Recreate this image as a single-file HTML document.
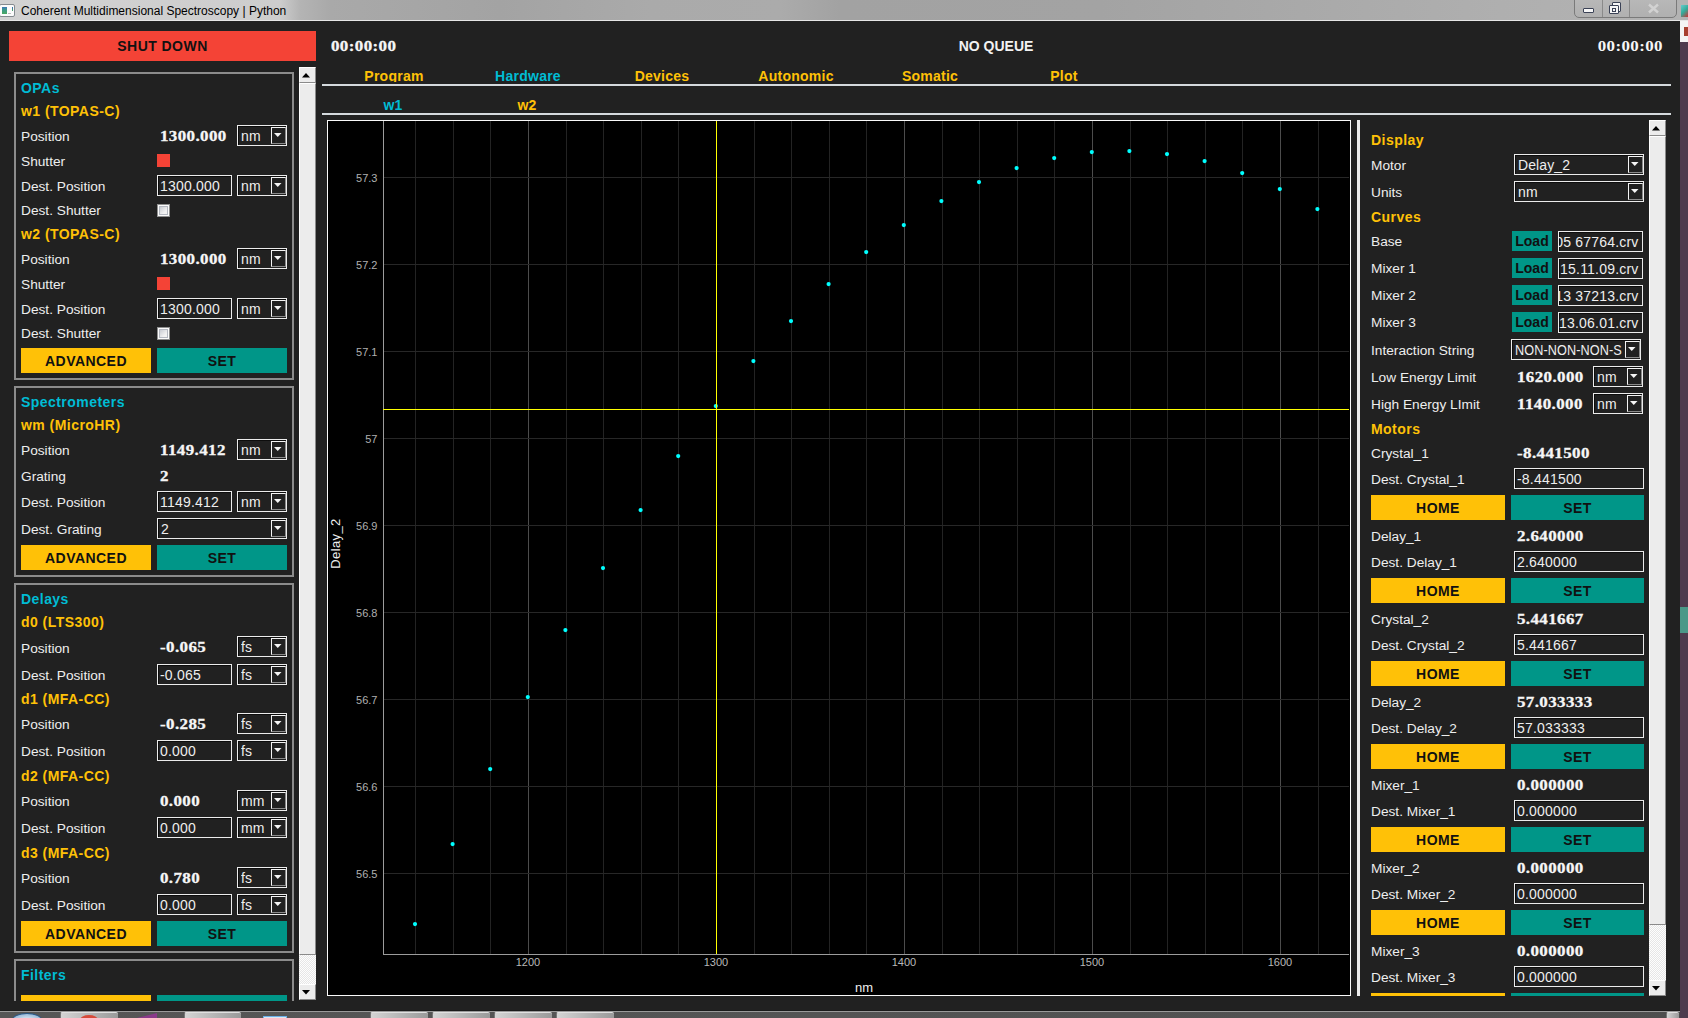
<!DOCTYPE html><html><head><meta charset="utf-8"><style>
html,body{margin:0;padding:0;}
body{width:1688px;height:1018px;overflow:hidden;position:relative;background:#212121;font-family:"Liberation Sans", sans-serif;}
.t{position:absolute;white-space:nowrap;}
.r{position:absolute;}
</style></head><body>
<div class="r" style="left:0;top:0;width:1688px;height:20px;background:linear-gradient(90deg,#d2d2d2 0px,#cdcdcd 280px,#b4b4b4 300px,#a9a9a9 330px,#a3a3a3 500px,#aaaaaa 650px,#ababab 780px,#a2a2a2 840px,#a3a3a3 1100px,#a9a9a9 1300px,#afafaf 1500px,#b3b3b3 1688px);"></div>
<div class="r" style="left:0px;top:20px;width:1688px;height:1px;background:#e6e6e6;"></div>
<div class="r" style="left:-1px;top:4px;width:14px;height:11px;background:#fbfbfb;border:1px solid #858a8f;border-radius:2px;"></div>
<div class="r" style="left:2px;top:7px;width:5px;height:7px;background:linear-gradient(#3f78b8,#3c9a8a 40%,#4aa860);"></div>
<div class="r" style="left:12px;top:7px;width:1px;height:4px;background:linear-gradient(#3a6ab8,#4aa860);"></div>
<div class="r" style="left:8px;top:13px;width:3px;height:1px;background:#bdbdbd;"></div>
<div class="t" style="left:21px;top:5.44px;font-size:12px;line-height:12px;color:#000;">Coherent Multidimensional Spectroscopy | Python</div>
<div class="r" style="left:1574px;top:-2px;width:101px;height:18px;border:1px solid #7a7a7a;border-radius:0 0 5px 5px;background:linear-gradient(#b8b8b8,#b0b0b0);"></div>
<div class="r" style="left:1602px;top:0px;width:1px;height:17px;background:#8a8a8a;"></div>
<div class="r" style="left:1629px;top:0px;width:1px;height:17px;background:#8a8a8a;"></div>
<div class="r" style="left:1583px;top:8px;width:9px;height:3px;border:1px solid #3b4256;border-radius:1px;background:#f6f6f6"></div>
<div class="r" style="left:1612px;top:2px;width:7px;height:8px;border:1px solid #3b4256;border-radius:1px;background:#f6f6f6"></div>
<div class="r" style="left:1609px;top:5px;width:8px;height:7px;border:1px solid #3b4256;border-radius:1px;background:#f6f6f6"></div>
<div class="r" style="left:1612px;top:8px;width:2px;height:2px;border:1px solid #3b4256;"></div>
<svg class="r" style="left:1647px;top:3px" width="13" height="11"><path d="M2 1.5L11 9.5M11 1.5L2 9.5" stroke="#d2d2d2" stroke-width="2.4"/></svg>
<div class="r" style="left:1680px;top:21px;width:8px;height:997px;background:#4e3b4e;"></div>
<div class="r" style="left:1680px;top:21px;width:8px;height:21px;background:#f4f4f4;"></div>
<div class="r" style="left:1684px;top:27px;width:4px;height:9px;background:#a84030;"></div>
<div class="r" style="left:1680px;top:607px;width:8px;height:26px;background:#4b9888;"></div>
<div class="r" style="left:1681px;top:5px;width:7px;height:12px;background:linear-gradient(135deg,#6cc 0,#3a9 50%,#c33 100%)"></div>
<div class="r" style="left:0px;top:1010px;width:1680px;height:1px;background:#1a1a1a;"></div>
<div class="r" style="left:0;top:1011px;width:1680px;height:7px;background:linear-gradient(90deg,#565656,#545454 50%,#4e4e4e);border-top:1px solid #9a9a9a;box-sizing:border-box"></div>
<div class="r" style="left:60px;top:1012px;width:58px;height:6px;background:linear-gradient(90deg,#d4d4d4,#9a9a9a);border-top:1px solid #e0e0e0;border-left:1px solid #777;box-sizing:border-box;border-radius:2px 2px 0 0"></div>
<div class="r" style="left:184px;top:1012px;width:57px;height:6px;background:linear-gradient(90deg,#d4d4d4,#9a9a9a);border-top:1px solid #e0e0e0;border-left:1px solid #777;box-sizing:border-box;border-radius:2px 2px 0 0"></div>
<div class="r" style="left:370px;top:1012px;width:58px;height:6px;background:linear-gradient(90deg,#d4d4d4,#9a9a9a);border-top:1px solid #e0e0e0;border-left:1px solid #777;box-sizing:border-box;border-radius:2px 2px 0 0"></div>
<div class="r" style="left:432px;top:1012px;width:58px;height:6px;background:linear-gradient(90deg,#d4d4d4,#9a9a9a);border-top:1px solid #e0e0e0;border-left:1px solid #777;box-sizing:border-box;border-radius:2px 2px 0 0"></div>
<div class="r" style="left:494px;top:1012px;width:58px;height:6px;background:linear-gradient(90deg,#d4d4d4,#9a9a9a);border-top:1px solid #e0e0e0;border-left:1px solid #777;box-sizing:border-box;border-radius:2px 2px 0 0"></div>
<div class="r" style="left:556px;top:1012px;width:58px;height:6px;background:linear-gradient(90deg,#d4d4d4,#9a9a9a);border-top:1px solid #e0e0e0;border-left:1px solid #777;box-sizing:border-box;border-radius:2px 2px 0 0"></div>
<div class="r" style="left:1666px;top:1012px;width:13px;height:6px;background:linear-gradient(90deg,#d4d4d4,#9a9a9a);border-top:1px solid #e0e0e0;border-left:1px solid #777;box-sizing:border-box;border-radius:2px 2px 0 0"></div>
<div class="r" style="left:12px;top:1013px;width:30px;height:14px;border-radius:50%;background:radial-gradient(#e8f0f8,#7aa4cc);border:1px solid #2a5a8a;box-sizing:border-box"></div>
<div class="r" style="left:80px;top:1015px;width:18px;height:10px;border-radius:50%;background:#d64a3a"></div>
<svg class="r" style="left:133px;top:1013px" width="24" height="6"><path d="M0 6L24 0V6Z" fill="#8a3a8a"/></svg>
<div class="r" style="left:263px;top:1016px;width:22px;height:4px;border:1px solid #6ab0e8;background:#dfe8f0"></div>
<div class="r" style="left:9px;top:31px;width:307px;height:30px;background:#f44336;"></div>
<div class="t" style="left:-37.5px;width:400px;text-align:center;top:39.15px;font-size:14px;line-height:14px;color:#111;font-weight:bold;letter-spacing:0.45px;">SHUT DOWN</div>
<div class="t" style="left:331px;top:38.94px;font-size:15px;line-height:15px;color:#f6f6f6;font-weight:bold;font-family:'Liberation Serif', serif;letter-spacing:0.35px;transform:scaleX(1.13);transform-origin:0 0;-webkit-text-stroke:0.3px #f6f6f6;">00:00:00</div>
<div class="t" style="left:796px;width:400px;text-align:center;top:39.15px;font-size:14px;line-height:14px;color:#f2f2f2;font-weight:bold;">NO QUEUE</div>
<div class="t" style="left:1262px;width:400px;text-align:right;top:38.94px;font-size:15px;line-height:15px;color:#f6f6f6;font-weight:bold;font-family:'Liberation Serif', serif;letter-spacing:0.35px;transform:scaleX(1.13);transform-origin:100% 0;margin-left:1px">00:00:00</div>
<div class="r" style="left:299px;top:67px;width:15px;height:14px;background:#ececec;border-left:1px solid #fff;border-top:1px solid #fff;border-right:1px solid #8a8a8a;border-bottom:1px solid #8a8a8a;"></div>
<svg class="r" style="left:302px;top:73px" width="9" height="5"><path d="M0 4.5H8L4 0Z" fill="#000"/></svg>
<div class="r" style="left:299px;top:83px;width:15px;height:870px;background:#ececec;border-left:1px solid #fff;border-top:1px solid #fff;border-right:1px solid #8a8a8a;border-bottom:1px solid #8a8a8a;"></div>
<div class="r" style="left:299px;top:955px;width:17px;height:29px;background:repeating-conic-gradient(#e6e6e6 0 25%, #fdfdfd 0 50%) 0 0/2px 2px;"></div>
<div class="r" style="left:299px;top:984px;width:15px;height:14px;background:#ececec;border-left:1px solid #fff;border-top:1px solid #fff;border-right:1px solid #8a8a8a;border-bottom:1px solid #8a8a8a;"></div>
<svg class="r" style="left:302px;top:990px" width="9" height="5"><path d="M0 0H8L4 4.5Z" fill="#000"/></svg>
<div class="r" style="left:0;top:0;width:298px;height:1001px;overflow:hidden">
<div class="r" style="left:14px;top:72px;width:280px;height:2px;background:#8c8c8c;"></div>
<div class="r" style="left:14px;top:72px;width:2px;height:308px;background:#8c8c8c;"></div>
<div class="r" style="left:292px;top:72px;width:2px;height:308px;background:#8c8c8c;"></div>
<div class="r" style="left:14px;top:378px;width:280px;height:2px;background:#8c8c8c;"></div>
<div class="r" style="left:14px;top:386px;width:280px;height:2px;background:#8c8c8c;"></div>
<div class="r" style="left:14px;top:386px;width:2px;height:191px;background:#8c8c8c;"></div>
<div class="r" style="left:292px;top:386px;width:2px;height:191px;background:#8c8c8c;"></div>
<div class="r" style="left:14px;top:575px;width:280px;height:2px;background:#8c8c8c;"></div>
<div class="r" style="left:14px;top:583px;width:280px;height:2px;background:#8c8c8c;"></div>
<div class="r" style="left:14px;top:583px;width:2px;height:370px;background:#8c8c8c;"></div>
<div class="r" style="left:292px;top:583px;width:2px;height:370px;background:#8c8c8c;"></div>
<div class="r" style="left:14px;top:951px;width:280px;height:2px;background:#8c8c8c;"></div>
<div class="r" style="left:14px;top:959px;width:280px;height:2px;background:#8c8c8c;"></div>
<div class="r" style="left:14px;top:959px;width:2px;height:42px;background:#8c8c8c;"></div>
<div class="r" style="left:292px;top:959px;width:2px;height:42px;background:#8c8c8c;"></div>
<div class="t" style="left:21px;top:81.15px;font-size:14px;line-height:14px;color:#00bcd4;font-weight:bold;letter-spacing:0.45px;">OPAs</div>
<div class="t" style="left:21px;top:104.15px;font-size:14px;line-height:14px;color:#ffc107;font-weight:bold;letter-spacing:0.45px;">w1 (TOPAS-C)</div>
<div class="t" style="left:21px;top:130.20px;font-size:13.7px;line-height:13.7px;color:#eeeeee;">Position</div>
<div class="t" style="left:160px;top:129.24px;font-size:15px;line-height:15px;color:#f6f6f6;font-weight:bold;font-family:'Liberation Serif', serif;letter-spacing:0.35px;transform:scaleX(1.13);transform-origin:0 0;-webkit-text-stroke:0.3px #f6f6f6;">1300.000</div>
<div class="r" style="left:237px;top:125px;width:48px;height:19px;border:1px solid #ececec;background:#212121;"></div>
<div class="r" style="left:238px;top:126px;width:48px;height:1px;background:#0d0d0d;"></div>
<div class="r" style="left:238px;top:126px;width:1px;height:19px;background:#0d0d0d;"></div>
<div class="r" style="left:271px;top:127px;width:13px;height:15px;border-left:1px solid #f4f4f4;border-top:1px solid #f4f4f4;border-right:1px solid #8a8a8a;border-bottom:1px solid #8a8a8a;background:#212121"></div>
<svg class="r" style="left:274px;top:133px" width="8" height="5"><path d="M0 0H7.5L3.75 4Z" fill="#f4f4f4"/></svg>
<div class="t" style="left:241px;top:128.85px;font-size:14px;line-height:14px;color:#eeeeee;letter-spacing:0.1px;width:30px;overflow:hidden;padding-bottom:5px;">nm</div>
<div class="t" style="left:21px;top:154.70px;font-size:13.7px;line-height:13.7px;color:#eeeeee;">Shutter</div>
<div class="r" style="left:157px;top:154px;width:13px;height:13px;background:#f44336;"></div>
<div class="t" style="left:21px;top:179.70px;font-size:13.7px;line-height:13.7px;color:#eeeeee;">Dest. Position</div>
<div class="r" style="left:157px;top:175px;width:73px;height:19px;border:1px solid #ececec;background:#212121;"></div>
<div class="r" style="left:158px;top:176px;width:73px;height:1px;background:#0d0d0d;"></div>
<div class="r" style="left:158px;top:176px;width:1px;height:19px;background:#0d0d0d;"></div>
<div class="t" style="left:160px;top:178.85px;font-size:14px;line-height:14px;color:#eeeeee;letter-spacing:0.2px;">1300.000</div>
<div class="r" style="left:237px;top:175px;width:48px;height:19px;border:1px solid #ececec;background:#212121;"></div>
<div class="r" style="left:238px;top:176px;width:48px;height:1px;background:#0d0d0d;"></div>
<div class="r" style="left:238px;top:176px;width:1px;height:19px;background:#0d0d0d;"></div>
<div class="r" style="left:271px;top:177px;width:13px;height:15px;border-left:1px solid #f4f4f4;border-top:1px solid #f4f4f4;border-right:1px solid #8a8a8a;border-bottom:1px solid #8a8a8a;background:#212121"></div>
<svg class="r" style="left:274px;top:183px" width="8" height="5"><path d="M0 0H7.5L3.75 4Z" fill="#f4f4f4"/></svg>
<div class="t" style="left:241px;top:178.85px;font-size:14px;line-height:14px;color:#eeeeee;letter-spacing:0.1px;width:30px;overflow:hidden;padding-bottom:5px;">nm</div>
<div class="t" style="left:21px;top:204.30px;font-size:13.7px;line-height:13.7px;color:#eeeeee;">Dest. Shutter</div>
<div class="r" style="left:157px;top:204px;width:11px;height:11px;border:1px solid #8e8f8f;background:#fbfbfb"></div>
<div class="r" style="left:159px;top:206px;width:7px;height:7px;border:1px solid #b4b8c0;background:linear-gradient(135deg,#c9ccd2,#f2f2f2 70%)"></div>
<div class="t" style="left:21px;top:227.15px;font-size:14px;line-height:14px;color:#ffc107;font-weight:bold;letter-spacing:0.45px;">w2 (TOPAS-C)</div>
<div class="t" style="left:21px;top:253.20px;font-size:13.7px;line-height:13.7px;color:#eeeeee;">Position</div>
<div class="t" style="left:160px;top:252.24px;font-size:15px;line-height:15px;color:#f6f6f6;font-weight:bold;font-family:'Liberation Serif', serif;letter-spacing:0.35px;transform:scaleX(1.13);transform-origin:0 0;-webkit-text-stroke:0.3px #f6f6f6;">1300.000</div>
<div class="r" style="left:237px;top:248px;width:48px;height:19px;border:1px solid #ececec;background:#212121;"></div>
<div class="r" style="left:238px;top:249px;width:48px;height:1px;background:#0d0d0d;"></div>
<div class="r" style="left:238px;top:249px;width:1px;height:19px;background:#0d0d0d;"></div>
<div class="r" style="left:271px;top:250px;width:13px;height:15px;border-left:1px solid #f4f4f4;border-top:1px solid #f4f4f4;border-right:1px solid #8a8a8a;border-bottom:1px solid #8a8a8a;background:#212121"></div>
<svg class="r" style="left:274px;top:256px" width="8" height="5"><path d="M0 0H7.5L3.75 4Z" fill="#f4f4f4"/></svg>
<div class="t" style="left:241px;top:251.85px;font-size:14px;line-height:14px;color:#eeeeee;letter-spacing:0.1px;width:30px;overflow:hidden;padding-bottom:5px;">nm</div>
<div class="t" style="left:21px;top:277.70px;font-size:13.7px;line-height:13.7px;color:#eeeeee;">Shutter</div>
<div class="r" style="left:157px;top:277px;width:13px;height:13px;background:#f44336;"></div>
<div class="t" style="left:21px;top:302.70px;font-size:13.7px;line-height:13.7px;color:#eeeeee;">Dest. Position</div>
<div class="r" style="left:157px;top:298px;width:73px;height:19px;border:1px solid #ececec;background:#212121;"></div>
<div class="r" style="left:158px;top:299px;width:73px;height:1px;background:#0d0d0d;"></div>
<div class="r" style="left:158px;top:299px;width:1px;height:19px;background:#0d0d0d;"></div>
<div class="t" style="left:160px;top:301.85px;font-size:14px;line-height:14px;color:#eeeeee;letter-spacing:0.2px;">1300.000</div>
<div class="r" style="left:237px;top:298px;width:48px;height:19px;border:1px solid #ececec;background:#212121;"></div>
<div class="r" style="left:238px;top:299px;width:48px;height:1px;background:#0d0d0d;"></div>
<div class="r" style="left:238px;top:299px;width:1px;height:19px;background:#0d0d0d;"></div>
<div class="r" style="left:271px;top:300px;width:13px;height:15px;border-left:1px solid #f4f4f4;border-top:1px solid #f4f4f4;border-right:1px solid #8a8a8a;border-bottom:1px solid #8a8a8a;background:#212121"></div>
<svg class="r" style="left:274px;top:306px" width="8" height="5"><path d="M0 0H7.5L3.75 4Z" fill="#f4f4f4"/></svg>
<div class="t" style="left:241px;top:301.85px;font-size:14px;line-height:14px;color:#eeeeee;letter-spacing:0.1px;width:30px;overflow:hidden;padding-bottom:5px;">nm</div>
<div class="t" style="left:21px;top:327.30px;font-size:13.7px;line-height:13.7px;color:#eeeeee;">Dest. Shutter</div>
<div class="r" style="left:157px;top:327px;width:11px;height:11px;border:1px solid #8e8f8f;background:#fbfbfb"></div>
<div class="r" style="left:159px;top:329px;width:7px;height:7px;border:1px solid #b4b8c0;background:linear-gradient(135deg,#c9ccd2,#f2f2f2 70%)"></div>
<div class="r" style="left:21px;top:348px;width:130px;height:25px;background:#ffc107;"></div>
<div class="t" style="left:-114.0px;width:400px;text-align:center;top:353.65px;font-size:14px;line-height:14px;color:#111;font-weight:bold;letter-spacing:0.45px;">ADVANCED</div>
<div class="r" style="left:157px;top:348px;width:130px;height:25px;background:#009688;"></div>
<div class="t" style="left:22.0px;width:400px;text-align:center;top:353.65px;font-size:14px;line-height:14px;color:#111;font-weight:bold;letter-spacing:0.45px;">SET</div>
<div class="t" style="left:21px;top:394.65px;font-size:14px;line-height:14px;color:#00bcd4;font-weight:bold;letter-spacing:0.45px;">Spectrometers</div>
<div class="t" style="left:21px;top:418.15px;font-size:14px;line-height:14px;color:#ffc107;font-weight:bold;letter-spacing:0.45px;">wm (MicroHR)</div>
<div class="t" style="left:21px;top:444.10px;font-size:13.7px;line-height:13.7px;color:#eeeeee;">Position</div>
<div class="t" style="left:160px;top:442.94px;font-size:15px;line-height:15px;color:#f6f6f6;font-weight:bold;font-family:'Liberation Serif', serif;letter-spacing:0.35px;transform:scaleX(1.13);transform-origin:0 0;-webkit-text-stroke:0.3px #f6f6f6;">1149.412</div>
<div class="r" style="left:237px;top:439px;width:48px;height:19px;border:1px solid #ececec;background:#212121;"></div>
<div class="r" style="left:238px;top:440px;width:48px;height:1px;background:#0d0d0d;"></div>
<div class="r" style="left:238px;top:440px;width:1px;height:19px;background:#0d0d0d;"></div>
<div class="r" style="left:271px;top:441px;width:13px;height:15px;border-left:1px solid #f4f4f4;border-top:1px solid #f4f4f4;border-right:1px solid #8a8a8a;border-bottom:1px solid #8a8a8a;background:#212121"></div>
<svg class="r" style="left:274px;top:447px" width="8" height="5"><path d="M0 0H7.5L3.75 4Z" fill="#f4f4f4"/></svg>
<div class="t" style="left:241px;top:442.85px;font-size:14px;line-height:14px;color:#eeeeee;letter-spacing:0.1px;width:30px;overflow:hidden;padding-bottom:5px;">nm</div>
<div class="t" style="left:21px;top:470.00px;font-size:13.7px;line-height:13.7px;color:#eeeeee;">Grating</div>
<div class="t" style="left:160px;top:468.84px;font-size:15px;line-height:15px;color:#f6f6f6;font-weight:bold;font-family:'Liberation Serif', serif;letter-spacing:0.35px;transform:scaleX(1.13);transform-origin:0 0;-webkit-text-stroke:0.3px #f6f6f6;">2</div>
<div class="t" style="left:21px;top:496.10px;font-size:13.7px;line-height:13.7px;color:#eeeeee;">Dest. Position</div>
<div class="r" style="left:157px;top:491px;width:73px;height:19px;border:1px solid #ececec;background:#212121;"></div>
<div class="r" style="left:158px;top:492px;width:73px;height:1px;background:#0d0d0d;"></div>
<div class="r" style="left:158px;top:492px;width:1px;height:19px;background:#0d0d0d;"></div>
<div class="t" style="left:160px;top:494.85px;font-size:14px;line-height:14px;color:#eeeeee;letter-spacing:0.2px;">1149.412</div>
<div class="r" style="left:237px;top:491px;width:48px;height:19px;border:1px solid #ececec;background:#212121;"></div>
<div class="r" style="left:238px;top:492px;width:48px;height:1px;background:#0d0d0d;"></div>
<div class="r" style="left:238px;top:492px;width:1px;height:19px;background:#0d0d0d;"></div>
<div class="r" style="left:271px;top:493px;width:13px;height:15px;border-left:1px solid #f4f4f4;border-top:1px solid #f4f4f4;border-right:1px solid #8a8a8a;border-bottom:1px solid #8a8a8a;background:#212121"></div>
<svg class="r" style="left:274px;top:499px" width="8" height="5"><path d="M0 0H7.5L3.75 4Z" fill="#f4f4f4"/></svg>
<div class="t" style="left:241px;top:494.85px;font-size:14px;line-height:14px;color:#eeeeee;letter-spacing:0.1px;width:30px;overflow:hidden;padding-bottom:5px;">nm</div>
<div class="t" style="left:21px;top:522.60px;font-size:13.7px;line-height:13.7px;color:#eeeeee;">Dest. Grating</div>
<div class="r" style="left:157px;top:518px;width:128px;height:19px;border:1px solid #ececec;background:#212121;"></div>
<div class="r" style="left:158px;top:519px;width:128px;height:1px;background:#0d0d0d;"></div>
<div class="r" style="left:158px;top:519px;width:1px;height:19px;background:#0d0d0d;"></div>
<div class="r" style="left:271px;top:520px;width:13px;height:15px;border-left:1px solid #f4f4f4;border-top:1px solid #f4f4f4;border-right:1px solid #8a8a8a;border-bottom:1px solid #8a8a8a;background:#212121"></div>
<svg class="r" style="left:274px;top:526px" width="8" height="5"><path d="M0 0H7.5L3.75 4Z" fill="#f4f4f4"/></svg>
<div class="t" style="left:161px;top:521.85px;font-size:14px;line-height:14px;color:#eeeeee;letter-spacing:0.1px;width:110px;overflow:hidden;padding-bottom:5px;">2</div>
<div class="r" style="left:21px;top:545px;width:130px;height:25px;background:#ffc107;"></div>
<div class="t" style="left:-114.0px;width:400px;text-align:center;top:550.65px;font-size:14px;line-height:14px;color:#111;font-weight:bold;letter-spacing:0.45px;">ADVANCED</div>
<div class="r" style="left:157px;top:545px;width:130px;height:25px;background:#009688;"></div>
<div class="t" style="left:22.0px;width:400px;text-align:center;top:550.65px;font-size:14px;line-height:14px;color:#111;font-weight:bold;letter-spacing:0.45px;">SET</div>
<div class="t" style="left:21px;top:592.15px;font-size:14px;line-height:14px;color:#00bcd4;font-weight:bold;letter-spacing:0.45px;">Delays</div>
<div class="t" style="left:21px;top:615.35px;font-size:14px;line-height:14px;color:#ffc107;font-weight:bold;letter-spacing:0.45px;">d0 (LTS300)</div>
<div class="t" style="left:21px;top:641.50px;font-size:13.7px;line-height:13.7px;color:#eeeeee;">Position</div>
<div class="t" style="left:160px;top:640.14px;font-size:15px;line-height:15px;color:#f6f6f6;font-weight:bold;font-family:'Liberation Serif', serif;letter-spacing:0.35px;transform:scaleX(1.13);transform-origin:0 0;-webkit-text-stroke:0.3px #f6f6f6;">-0.065</div>
<div class="r" style="left:237px;top:636px;width:48px;height:19px;border:1px solid #ececec;background:#212121;"></div>
<div class="r" style="left:238px;top:637px;width:48px;height:1px;background:#0d0d0d;"></div>
<div class="r" style="left:238px;top:637px;width:1px;height:19px;background:#0d0d0d;"></div>
<div class="r" style="left:271px;top:638px;width:13px;height:15px;border-left:1px solid #f4f4f4;border-top:1px solid #f4f4f4;border-right:1px solid #8a8a8a;border-bottom:1px solid #8a8a8a;background:#212121"></div>
<svg class="r" style="left:274px;top:644px" width="8" height="5"><path d="M0 0H7.5L3.75 4Z" fill="#f4f4f4"/></svg>
<div class="t" style="left:241px;top:639.85px;font-size:14px;line-height:14px;color:#eeeeee;letter-spacing:0.1px;width:30px;overflow:hidden;padding-bottom:5px;">fs</div>
<div class="t" style="left:21px;top:668.50px;font-size:13.7px;line-height:13.7px;color:#eeeeee;">Dest. Position</div>
<div class="r" style="left:157px;top:664px;width:73px;height:19px;border:1px solid #ececec;background:#212121;"></div>
<div class="r" style="left:158px;top:665px;width:73px;height:1px;background:#0d0d0d;"></div>
<div class="r" style="left:158px;top:665px;width:1px;height:19px;background:#0d0d0d;"></div>
<div class="t" style="left:160px;top:667.85px;font-size:14px;line-height:14px;color:#eeeeee;letter-spacing:0.2px;">-0.065</div>
<div class="r" style="left:237px;top:664px;width:48px;height:19px;border:1px solid #ececec;background:#212121;"></div>
<div class="r" style="left:238px;top:665px;width:48px;height:1px;background:#0d0d0d;"></div>
<div class="r" style="left:238px;top:665px;width:1px;height:19px;background:#0d0d0d;"></div>
<div class="r" style="left:271px;top:666px;width:13px;height:15px;border-left:1px solid #f4f4f4;border-top:1px solid #f4f4f4;border-right:1px solid #8a8a8a;border-bottom:1px solid #8a8a8a;background:#212121"></div>
<svg class="r" style="left:274px;top:672px" width="8" height="5"><path d="M0 0H7.5L3.75 4Z" fill="#f4f4f4"/></svg>
<div class="t" style="left:241px;top:667.85px;font-size:14px;line-height:14px;color:#eeeeee;letter-spacing:0.1px;width:30px;overflow:hidden;padding-bottom:5px;">fs</div>
<div class="t" style="left:21px;top:691.95px;font-size:14px;line-height:14px;color:#ffc107;font-weight:bold;letter-spacing:0.45px;">d1 (MFA-CC)</div>
<div class="t" style="left:21px;top:718.10px;font-size:13.7px;line-height:13.7px;color:#eeeeee;">Position</div>
<div class="t" style="left:160px;top:716.74px;font-size:15px;line-height:15px;color:#f6f6f6;font-weight:bold;font-family:'Liberation Serif', serif;letter-spacing:0.35px;transform:scaleX(1.13);transform-origin:0 0;-webkit-text-stroke:0.3px #f6f6f6;">-0.285</div>
<div class="r" style="left:237px;top:713px;width:48px;height:19px;border:1px solid #ececec;background:#212121;"></div>
<div class="r" style="left:238px;top:714px;width:48px;height:1px;background:#0d0d0d;"></div>
<div class="r" style="left:238px;top:714px;width:1px;height:19px;background:#0d0d0d;"></div>
<div class="r" style="left:271px;top:715px;width:13px;height:15px;border-left:1px solid #f4f4f4;border-top:1px solid #f4f4f4;border-right:1px solid #8a8a8a;border-bottom:1px solid #8a8a8a;background:#212121"></div>
<svg class="r" style="left:274px;top:721px" width="8" height="5"><path d="M0 0H7.5L3.75 4Z" fill="#f4f4f4"/></svg>
<div class="t" style="left:241px;top:716.85px;font-size:14px;line-height:14px;color:#eeeeee;letter-spacing:0.1px;width:30px;overflow:hidden;padding-bottom:5px;">fs</div>
<div class="t" style="left:21px;top:745.10px;font-size:13.7px;line-height:13.7px;color:#eeeeee;">Dest. Position</div>
<div class="r" style="left:157px;top:740px;width:73px;height:19px;border:1px solid #ececec;background:#212121;"></div>
<div class="r" style="left:158px;top:741px;width:73px;height:1px;background:#0d0d0d;"></div>
<div class="r" style="left:158px;top:741px;width:1px;height:19px;background:#0d0d0d;"></div>
<div class="t" style="left:160px;top:743.85px;font-size:14px;line-height:14px;color:#eeeeee;letter-spacing:0.2px;">0.000</div>
<div class="r" style="left:237px;top:740px;width:48px;height:19px;border:1px solid #ececec;background:#212121;"></div>
<div class="r" style="left:238px;top:741px;width:48px;height:1px;background:#0d0d0d;"></div>
<div class="r" style="left:238px;top:741px;width:1px;height:19px;background:#0d0d0d;"></div>
<div class="r" style="left:271px;top:742px;width:13px;height:15px;border-left:1px solid #f4f4f4;border-top:1px solid #f4f4f4;border-right:1px solid #8a8a8a;border-bottom:1px solid #8a8a8a;background:#212121"></div>
<svg class="r" style="left:274px;top:748px" width="8" height="5"><path d="M0 0H7.5L3.75 4Z" fill="#f4f4f4"/></svg>
<div class="t" style="left:241px;top:743.85px;font-size:14px;line-height:14px;color:#eeeeee;letter-spacing:0.1px;width:30px;overflow:hidden;padding-bottom:5px;">fs</div>
<div class="t" style="left:21px;top:768.75px;font-size:14px;line-height:14px;color:#ffc107;font-weight:bold;letter-spacing:0.45px;">d2 (MFA-CC)</div>
<div class="t" style="left:21px;top:794.90px;font-size:13.7px;line-height:13.7px;color:#eeeeee;">Position</div>
<div class="t" style="left:160px;top:793.54px;font-size:15px;line-height:15px;color:#f6f6f6;font-weight:bold;font-family:'Liberation Serif', serif;letter-spacing:0.35px;transform:scaleX(1.13);transform-origin:0 0;-webkit-text-stroke:0.3px #f6f6f6;">0.000</div>
<div class="r" style="left:237px;top:790px;width:48px;height:19px;border:1px solid #ececec;background:#212121;"></div>
<div class="r" style="left:238px;top:791px;width:48px;height:1px;background:#0d0d0d;"></div>
<div class="r" style="left:238px;top:791px;width:1px;height:19px;background:#0d0d0d;"></div>
<div class="r" style="left:271px;top:792px;width:13px;height:15px;border-left:1px solid #f4f4f4;border-top:1px solid #f4f4f4;border-right:1px solid #8a8a8a;border-bottom:1px solid #8a8a8a;background:#212121"></div>
<svg class="r" style="left:274px;top:798px" width="8" height="5"><path d="M0 0H7.5L3.75 4Z" fill="#f4f4f4"/></svg>
<div class="t" style="left:241px;top:793.85px;font-size:14px;line-height:14px;color:#eeeeee;letter-spacing:0.1px;width:30px;overflow:hidden;padding-bottom:5px;">mm</div>
<div class="t" style="left:21px;top:821.90px;font-size:13.7px;line-height:13.7px;color:#eeeeee;">Dest. Position</div>
<div class="r" style="left:157px;top:817px;width:73px;height:19px;border:1px solid #ececec;background:#212121;"></div>
<div class="r" style="left:158px;top:818px;width:73px;height:1px;background:#0d0d0d;"></div>
<div class="r" style="left:158px;top:818px;width:1px;height:19px;background:#0d0d0d;"></div>
<div class="t" style="left:160px;top:820.85px;font-size:14px;line-height:14px;color:#eeeeee;letter-spacing:0.2px;">0.000</div>
<div class="r" style="left:237px;top:817px;width:48px;height:19px;border:1px solid #ececec;background:#212121;"></div>
<div class="r" style="left:238px;top:818px;width:48px;height:1px;background:#0d0d0d;"></div>
<div class="r" style="left:238px;top:818px;width:1px;height:19px;background:#0d0d0d;"></div>
<div class="r" style="left:271px;top:819px;width:13px;height:15px;border-left:1px solid #f4f4f4;border-top:1px solid #f4f4f4;border-right:1px solid #8a8a8a;border-bottom:1px solid #8a8a8a;background:#212121"></div>
<svg class="r" style="left:274px;top:825px" width="8" height="5"><path d="M0 0H7.5L3.75 4Z" fill="#f4f4f4"/></svg>
<div class="t" style="left:241px;top:820.85px;font-size:14px;line-height:14px;color:#eeeeee;letter-spacing:0.1px;width:30px;overflow:hidden;padding-bottom:5px;">mm</div>
<div class="t" style="left:21px;top:845.75px;font-size:14px;line-height:14px;color:#ffc107;font-weight:bold;letter-spacing:0.45px;">d3 (MFA-CC)</div>
<div class="t" style="left:21px;top:871.90px;font-size:13.7px;line-height:13.7px;color:#eeeeee;">Position</div>
<div class="t" style="left:160px;top:870.54px;font-size:15px;line-height:15px;color:#f6f6f6;font-weight:bold;font-family:'Liberation Serif', serif;letter-spacing:0.35px;transform:scaleX(1.13);transform-origin:0 0;-webkit-text-stroke:0.3px #f6f6f6;">0.780</div>
<div class="r" style="left:237px;top:867px;width:48px;height:19px;border:1px solid #ececec;background:#212121;"></div>
<div class="r" style="left:238px;top:868px;width:48px;height:1px;background:#0d0d0d;"></div>
<div class="r" style="left:238px;top:868px;width:1px;height:19px;background:#0d0d0d;"></div>
<div class="r" style="left:271px;top:869px;width:13px;height:15px;border-left:1px solid #f4f4f4;border-top:1px solid #f4f4f4;border-right:1px solid #8a8a8a;border-bottom:1px solid #8a8a8a;background:#212121"></div>
<svg class="r" style="left:274px;top:875px" width="8" height="5"><path d="M0 0H7.5L3.75 4Z" fill="#f4f4f4"/></svg>
<div class="t" style="left:241px;top:870.85px;font-size:14px;line-height:14px;color:#eeeeee;letter-spacing:0.1px;width:30px;overflow:hidden;padding-bottom:5px;">fs</div>
<div class="t" style="left:21px;top:898.90px;font-size:13.7px;line-height:13.7px;color:#eeeeee;">Dest. Position</div>
<div class="r" style="left:157px;top:894px;width:73px;height:19px;border:1px solid #ececec;background:#212121;"></div>
<div class="r" style="left:158px;top:895px;width:73px;height:1px;background:#0d0d0d;"></div>
<div class="r" style="left:158px;top:895px;width:1px;height:19px;background:#0d0d0d;"></div>
<div class="t" style="left:160px;top:897.85px;font-size:14px;line-height:14px;color:#eeeeee;letter-spacing:0.2px;">0.000</div>
<div class="r" style="left:237px;top:894px;width:48px;height:19px;border:1px solid #ececec;background:#212121;"></div>
<div class="r" style="left:238px;top:895px;width:48px;height:1px;background:#0d0d0d;"></div>
<div class="r" style="left:238px;top:895px;width:1px;height:19px;background:#0d0d0d;"></div>
<div class="r" style="left:271px;top:896px;width:13px;height:15px;border-left:1px solid #f4f4f4;border-top:1px solid #f4f4f4;border-right:1px solid #8a8a8a;border-bottom:1px solid #8a8a8a;background:#212121"></div>
<svg class="r" style="left:274px;top:902px" width="8" height="5"><path d="M0 0H7.5L3.75 4Z" fill="#f4f4f4"/></svg>
<div class="t" style="left:241px;top:897.85px;font-size:14px;line-height:14px;color:#eeeeee;letter-spacing:0.1px;width:30px;overflow:hidden;padding-bottom:5px;">fs</div>
<div class="r" style="left:21px;top:921px;width:130px;height:25px;background:#ffc107;"></div>
<div class="t" style="left:-114.0px;width:400px;text-align:center;top:926.65px;font-size:14px;line-height:14px;color:#111;font-weight:bold;letter-spacing:0.45px;">ADVANCED</div>
<div class="r" style="left:157px;top:921px;width:130px;height:25px;background:#009688;"></div>
<div class="t" style="left:22.0px;width:400px;text-align:center;top:926.65px;font-size:14px;line-height:14px;color:#111;font-weight:bold;letter-spacing:0.45px;">SET</div>
<div class="t" style="left:21px;top:968.15px;font-size:14px;line-height:14px;color:#00bcd4;font-weight:bold;letter-spacing:0.45px;">Filters</div>
<div class="r" style="left:21px;top:995px;width:130px;height:25px;background:#ffc107;"></div>
<div class="r" style="left:157px;top:995px;width:130px;height:25px;background:#009688;"></div>
</div>
<div class="t" style="left:194px;width:400px;text-align:center;top:69.15px;font-size:14px;line-height:14px;color:#ffc107;font-weight:bold;letter-spacing:0.25px;height:12.8px;overflow:hidden;">Program</div>
<div class="t" style="left:328px;width:400px;text-align:center;top:69.15px;font-size:14px;line-height:14px;color:#00bcd4;font-weight:bold;letter-spacing:0.25px;height:12.8px;overflow:hidden;">Hardware</div>
<div class="t" style="left:462px;width:400px;text-align:center;top:69.15px;font-size:14px;line-height:14px;color:#ffc107;font-weight:bold;letter-spacing:0.25px;height:12.8px;overflow:hidden;">Devices</div>
<div class="t" style="left:596px;width:400px;text-align:center;top:69.15px;font-size:14px;line-height:14px;color:#ffc107;font-weight:bold;letter-spacing:0.25px;height:12.8px;overflow:hidden;">Autonomic</div>
<div class="t" style="left:730px;width:400px;text-align:center;top:69.15px;font-size:14px;line-height:14px;color:#ffc107;font-weight:bold;letter-spacing:0.25px;height:12.8px;overflow:hidden;">Somatic</div>
<div class="t" style="left:864px;width:400px;text-align:center;top:69.15px;font-size:14px;line-height:14px;color:#ffc107;font-weight:bold;letter-spacing:0.25px;height:12.8px;overflow:hidden;">Plot</div>
<div class="r" style="left:322px;top:84px;width:1349px;height:2px;background:#d4d9dd;"></div>
<div class="t" style="left:193px;width:400px;text-align:center;top:98.15px;font-size:14px;line-height:14px;color:#00bcd4;font-weight:bold;letter-spacing:0.25px;">w1</div>
<div class="t" style="left:327px;width:400px;text-align:center;top:98.15px;font-size:14px;line-height:14px;color:#ffc107;font-weight:bold;letter-spacing:0.25px;">w2</div>
<div class="r" style="left:322px;top:113px;width:1349px;height:2px;background:#d4d9dd;"></div>
<svg class="r" style="left:0;top:0" width="1688" height="1018">
<rect x="327.5" y="120.5" width="1023" height="875" fill="#000" stroke="#fafafa" stroke-width="1"/>
<line x1="415.5" y1="121" x2="415.5" y2="954" stroke="#232323" stroke-width="1"/>
<line x1="453.5" y1="121" x2="453.5" y2="954" stroke="#232323" stroke-width="1"/>
<line x1="490.5" y1="121" x2="490.5" y2="954" stroke="#232323" stroke-width="1"/>
<line x1="528.5" y1="121" x2="528.5" y2="954" stroke="#4c4c4c" stroke-width="1"/>
<line x1="566.5" y1="121" x2="566.5" y2="954" stroke="#232323" stroke-width="1"/>
<line x1="603.5" y1="121" x2="603.5" y2="954" stroke="#232323" stroke-width="1"/>
<line x1="641.5" y1="121" x2="641.5" y2="954" stroke="#232323" stroke-width="1"/>
<line x1="678.5" y1="121" x2="678.5" y2="954" stroke="#232323" stroke-width="1"/>
<line x1="716.5" y1="121" x2="716.5" y2="954" stroke="#4c4c4c" stroke-width="1"/>
<line x1="754.5" y1="121" x2="754.5" y2="954" stroke="#232323" stroke-width="1"/>
<line x1="791.5" y1="121" x2="791.5" y2="954" stroke="#232323" stroke-width="1"/>
<line x1="829.5" y1="121" x2="829.5" y2="954" stroke="#232323" stroke-width="1"/>
<line x1="866.5" y1="121" x2="866.5" y2="954" stroke="#232323" stroke-width="1"/>
<line x1="904.5" y1="121" x2="904.5" y2="954" stroke="#4c4c4c" stroke-width="1"/>
<line x1="942.5" y1="121" x2="942.5" y2="954" stroke="#232323" stroke-width="1"/>
<line x1="979.5" y1="121" x2="979.5" y2="954" stroke="#232323" stroke-width="1"/>
<line x1="1017.5" y1="121" x2="1017.5" y2="954" stroke="#232323" stroke-width="1"/>
<line x1="1054.5" y1="121" x2="1054.5" y2="954" stroke="#232323" stroke-width="1"/>
<line x1="1092.5" y1="121" x2="1092.5" y2="954" stroke="#4c4c4c" stroke-width="1"/>
<line x1="1130.5" y1="121" x2="1130.5" y2="954" stroke="#232323" stroke-width="1"/>
<line x1="1167.5" y1="121" x2="1167.5" y2="954" stroke="#232323" stroke-width="1"/>
<line x1="1205.5" y1="121" x2="1205.5" y2="954" stroke="#232323" stroke-width="1"/>
<line x1="1242.5" y1="121" x2="1242.5" y2="954" stroke="#232323" stroke-width="1"/>
<line x1="1280.5" y1="121" x2="1280.5" y2="954" stroke="#4c4c4c" stroke-width="1"/>
<line x1="1318.5" y1="121" x2="1318.5" y2="954" stroke="#232323" stroke-width="1"/>
<line x1="383" y1="873.5" x2="1349" y2="873.5" stroke="#272727" stroke-width="1"/>
<line x1="383" y1="786.5" x2="1349" y2="786.5" stroke="#272727" stroke-width="1"/>
<line x1="383" y1="699.5" x2="1349" y2="699.5" stroke="#272727" stroke-width="1"/>
<line x1="383" y1="612.5" x2="1349" y2="612.5" stroke="#272727" stroke-width="1"/>
<line x1="383" y1="525.5" x2="1349" y2="525.5" stroke="#272727" stroke-width="1"/>
<line x1="383" y1="438.5" x2="1349" y2="438.5" stroke="#272727" stroke-width="1"/>
<line x1="383" y1="351.5" x2="1349" y2="351.5" stroke="#272727" stroke-width="1"/>
<line x1="383" y1="264.5" x2="1349" y2="264.5" stroke="#272727" stroke-width="1"/>
<line x1="383" y1="177.5" x2="1349" y2="177.5" stroke="#272727" stroke-width="1"/>
<line x1="383.5" y1="121" x2="383.5" y2="954" stroke="#9c9c9c" stroke-width="1"/>
<line x1="383" y1="954.5" x2="1349" y2="954.5" stroke="#9c9c9c" stroke-width="1"/>
<circle cx="415.0" cy="924.1" r="2.1" fill="#00ffff"/>
<circle cx="452.6" cy="844.1" r="2.1" fill="#00ffff"/>
<circle cx="490.2" cy="769.1" r="2.1" fill="#00ffff"/>
<circle cx="527.8" cy="697.1" r="2.1" fill="#00ffff"/>
<circle cx="565.4" cy="630.1" r="2.1" fill="#00ffff"/>
<circle cx="603.0" cy="568.1" r="2.1" fill="#00ffff"/>
<circle cx="640.6" cy="510.1" r="2.1" fill="#00ffff"/>
<circle cx="678.2" cy="456.1" r="2.1" fill="#00ffff"/>
<circle cx="715.8" cy="406.1" r="2.1" fill="#00ffff"/>
<circle cx="753.4" cy="361.1" r="2.1" fill="#00ffff"/>
<circle cx="791.0" cy="321.1" r="2.1" fill="#00ffff"/>
<circle cx="828.6" cy="284.1" r="2.1" fill="#00ffff"/>
<circle cx="866.2" cy="252.1" r="2.1" fill="#00ffff"/>
<circle cx="903.8" cy="225.1" r="2.1" fill="#00ffff"/>
<circle cx="941.4" cy="201.1" r="2.1" fill="#00ffff"/>
<circle cx="979.0" cy="182.1" r="2.1" fill="#00ffff"/>
<circle cx="1016.6" cy="168.1" r="2.1" fill="#00ffff"/>
<circle cx="1054.2" cy="158.1" r="2.1" fill="#00ffff"/>
<circle cx="1091.8" cy="152.1" r="2.1" fill="#00ffff"/>
<circle cx="1129.4" cy="151.1" r="2.1" fill="#00ffff"/>
<circle cx="1167.0" cy="154.1" r="2.1" fill="#00ffff"/>
<circle cx="1204.6" cy="161.1" r="2.1" fill="#00ffff"/>
<circle cx="1242.2" cy="173.1" r="2.1" fill="#00ffff"/>
<circle cx="1279.8" cy="189.1" r="2.1" fill="#00ffff"/>
<circle cx="1317.4" cy="209.1" r="2.1" fill="#00ffff"/>
<line x1="716.5" y1="121" x2="716.5" y2="954" stroke="#ffff00" stroke-width="1"/>
<line x1="383" y1="409.5" x2="1349" y2="409.5" stroke="#ffff00" stroke-width="1"/>
</svg>
<div class="t" style="left:-22.5px;width:400px;text-align:right;top:868.79px;font-size:11px;line-height:11px;color:#b0b0b0;">56.5</div>
<div class="t" style="left:-22.5px;width:400px;text-align:right;top:781.79px;font-size:11px;line-height:11px;color:#b0b0b0;">56.6</div>
<div class="t" style="left:-22.5px;width:400px;text-align:right;top:694.79px;font-size:11px;line-height:11px;color:#b0b0b0;">56.7</div>
<div class="t" style="left:-22.5px;width:400px;text-align:right;top:607.79px;font-size:11px;line-height:11px;color:#b0b0b0;">56.8</div>
<div class="t" style="left:-22.5px;width:400px;text-align:right;top:520.79px;font-size:11px;line-height:11px;color:#b0b0b0;">56.9</div>
<div class="t" style="left:-22.5px;width:400px;text-align:right;top:433.79px;font-size:11px;line-height:11px;color:#b0b0b0;">57</div>
<div class="t" style="left:-22.5px;width:400px;text-align:right;top:346.79px;font-size:11px;line-height:11px;color:#b0b0b0;">57.1</div>
<div class="t" style="left:-22.5px;width:400px;text-align:right;top:259.79px;font-size:11px;line-height:11px;color:#b0b0b0;">57.2</div>
<div class="t" style="left:-22.5px;width:400px;text-align:right;top:172.79px;font-size:11px;line-height:11px;color:#b0b0b0;">57.3</div>
<div class="t" style="left:328.0px;width:400px;text-align:center;top:956.69px;font-size:11px;line-height:11px;color:#b8b8b8;">1200</div>
<div class="t" style="left:516.0px;width:400px;text-align:center;top:956.69px;font-size:11px;line-height:11px;color:#b8b8b8;">1300</div>
<div class="t" style="left:704.0px;width:400px;text-align:center;top:956.69px;font-size:11px;line-height:11px;color:#b8b8b8;">1400</div>
<div class="t" style="left:892.0px;width:400px;text-align:center;top:956.69px;font-size:11px;line-height:11px;color:#b8b8b8;">1500</div>
<div class="t" style="left:1080.0px;width:400px;text-align:center;top:956.69px;font-size:11px;line-height:11px;color:#b8b8b8;">1600</div>
<div class="t" style="left:664px;width:400px;text-align:center;top:981.00px;font-size:13px;line-height:13px;color:#eeeeee;">nm</div>
<div class="t" style="left:285px;top:537.3px;width:100px;text-align:center;font-size:13px;line-height:13px;letter-spacing:0.4px;color:#eeeeee;transform:rotate(-90deg);">Delay_2</div>
<div class="r" style="left:1357px;top:120px;width:3px;height:876px;background:#ebebeb;"></div>
<div class="r" style="left:1649px;top:120px;width:15px;height:14px;background:#ececec;border-left:1px solid #fff;border-top:1px solid #fff;border-right:1px solid #8a8a8a;border-bottom:1px solid #8a8a8a;"></div>
<svg class="r" style="left:1652px;top:126px" width="9" height="5"><path d="M0 4.5H8L4 0Z" fill="#000"/></svg>
<div class="r" style="left:1649px;top:136px;width:15px;height:787px;background:#ececec;border-left:1px solid #fff;border-top:1px solid #fff;border-right:1px solid #8a8a8a;border-bottom:1px solid #8a8a8a;"></div>
<div class="r" style="left:1649px;top:925px;width:17px;height:55px;background:repeating-conic-gradient(#e6e6e6 0 25%, #fdfdfd 0 50%) 0 0/2px 2px;"></div>
<div class="r" style="left:1649px;top:980px;width:15px;height:14px;background:#ececec;border-left:1px solid #fff;border-top:1px solid #fff;border-right:1px solid #8a8a8a;border-bottom:1px solid #8a8a8a;"></div>
<svg class="r" style="left:1652px;top:986px" width="9" height="5"><path d="M0 0H8L4 4.5Z" fill="#000"/></svg>
<div class="r" style="left:1360px;top:120px;width:289px;height:876px;overflow:hidden">
<div class="t" style="left:11px;top:13.05px;font-size:14px;line-height:14px;color:#ffc107;font-weight:bold;letter-spacing:0.45px;">Display</div>
<div class="t" style="left:11px;top:39.20px;font-size:13.7px;line-height:13.7px;color:#eeeeee;">Motor</div>
<div class="r" style="left:154px;top:34px;width:128px;height:19px;border:1px solid #ececec;background:#212121;"></div>
<div class="r" style="left:155px;top:35px;width:128px;height:1px;background:#0d0d0d;"></div>
<div class="r" style="left:155px;top:35px;width:1px;height:19px;background:#0d0d0d;"></div>
<div class="r" style="left:268px;top:36px;width:13px;height:15px;border-left:1px solid #f4f4f4;border-top:1px solid #f4f4f4;border-right:1px solid #8a8a8a;border-bottom:1px solid #8a8a8a;background:#212121"></div>
<svg class="r" style="left:271px;top:42px" width="8" height="5"><path d="M0 0H7.5L3.75 4Z" fill="#f4f4f4"/></svg>
<div class="t" style="left:158px;top:37.85px;font-size:14px;line-height:14px;color:#eeeeee;letter-spacing:0.1px;width:110px;overflow:hidden;padding-bottom:5px;">Delay_2</div>
<div class="t" style="left:11px;top:65.70px;font-size:13.7px;line-height:13.7px;color:#eeeeee;">Units</div>
<div class="r" style="left:154px;top:61px;width:128px;height:19px;border:1px solid #ececec;background:#212121;"></div>
<div class="r" style="left:155px;top:62px;width:128px;height:1px;background:#0d0d0d;"></div>
<div class="r" style="left:155px;top:62px;width:1px;height:19px;background:#0d0d0d;"></div>
<div class="r" style="left:268px;top:63px;width:13px;height:15px;border-left:1px solid #f4f4f4;border-top:1px solid #f4f4f4;border-right:1px solid #8a8a8a;border-bottom:1px solid #8a8a8a;background:#212121"></div>
<svg class="r" style="left:271px;top:69px" width="8" height="5"><path d="M0 0H7.5L3.75 4Z" fill="#f4f4f4"/></svg>
<div class="t" style="left:158px;top:64.85px;font-size:14px;line-height:14px;color:#eeeeee;letter-spacing:0.1px;width:110px;overflow:hidden;padding-bottom:5px;">nm</div>
<div class="t" style="left:11px;top:90.15px;font-size:14px;line-height:14px;color:#ffc107;font-weight:bold;letter-spacing:0.45px;">Curves</div>
<div class="t" style="left:11px;top:115.20px;font-size:13.7px;line-height:13.7px;color:#eeeeee;">Base</div>
<div class="r" style="left:152px;top:111px;width:40px;height:20px;background:#009688;"></div>
<div class="t" style="left:-28px;width:400px;text-align:center;top:114.15px;font-size:14px;line-height:14px;color:#111;font-weight:bold;">Load</div>
<div class="r" style="left:198px;top:111px;width:83px;height:19px;border:1px solid #ececec;background:#212121;"></div>
<div class="r" style="left:199px;top:112px;width:83px;height:1px;background:#0d0d0d;"></div>
<div class="r" style="left:199px;top:112px;width:1px;height:19px;background:#0d0d0d;"></div>
<div class="t" style="left:199px;top:114.85px;width:79.5px;overflow:hidden;text-align:right;font-size:14px;line-height:14px;letter-spacing:0.2px;color:#eeeeee;direction:rtl"><bdi>2016.01.05 67764.crv</bdi></div>
<div class="t" style="left:11px;top:142.20px;font-size:13.7px;line-height:13.7px;color:#eeeeee;">Mixer 1</div>
<div class="r" style="left:152px;top:138px;width:40px;height:20px;background:#009688;"></div>
<div class="t" style="left:-28px;width:400px;text-align:center;top:141.15px;font-size:14px;line-height:14px;color:#111;font-weight:bold;">Load</div>
<div class="r" style="left:198px;top:138px;width:83px;height:19px;border:1px solid #ececec;background:#212121;"></div>
<div class="r" style="left:199px;top:139px;width:83px;height:1px;background:#0d0d0d;"></div>
<div class="r" style="left:199px;top:139px;width:1px;height:19px;background:#0d0d0d;"></div>
<div class="t" style="left:199px;top:141.85px;width:79.5px;overflow:hidden;text-align:right;font-size:14px;line-height:14px;letter-spacing:0.2px;color:#eeeeee;direction:rtl"><bdi>2016 15.11.09.crv</bdi></div>
<div class="t" style="left:11px;top:169.20px;font-size:13.7px;line-height:13.7px;color:#eeeeee;">Mixer 2</div>
<div class="r" style="left:152px;top:165px;width:40px;height:20px;background:#009688;"></div>
<div class="t" style="left:-28px;width:400px;text-align:center;top:168.15px;font-size:14px;line-height:14px;color:#111;font-weight:bold;">Load</div>
<div class="r" style="left:198px;top:165px;width:83px;height:19px;border:1px solid #ececec;background:#212121;"></div>
<div class="r" style="left:199px;top:166px;width:83px;height:1px;background:#0d0d0d;"></div>
<div class="r" style="left:199px;top:166px;width:1px;height:19px;background:#0d0d0d;"></div>
<div class="t" style="left:199px;top:168.85px;width:79.5px;overflow:hidden;text-align:right;font-size:14px;line-height:14px;letter-spacing:0.2px;color:#eeeeee;direction:rtl"><bdi>2016.01.13 37213.crv</bdi></div>
<div class="t" style="left:11px;top:196.20px;font-size:13.7px;line-height:13.7px;color:#eeeeee;">Mixer 3</div>
<div class="r" style="left:152px;top:192px;width:40px;height:20px;background:#009688;"></div>
<div class="t" style="left:-28px;width:400px;text-align:center;top:195.15px;font-size:14px;line-height:14px;color:#111;font-weight:bold;">Load</div>
<div class="r" style="left:198px;top:192px;width:83px;height:19px;border:1px solid #ececec;background:#212121;"></div>
<div class="r" style="left:199px;top:193px;width:83px;height:1px;background:#0d0d0d;"></div>
<div class="r" style="left:199px;top:193px;width:1px;height:19px;background:#0d0d0d;"></div>
<div class="t" style="left:199px;top:195.85px;width:79.5px;overflow:hidden;text-align:right;font-size:14px;line-height:14px;letter-spacing:0.2px;color:#eeeeee;direction:rtl"><bdi>2016 13.06.01.crv</bdi></div>
<div class="t" style="left:11px;top:224.20px;font-size:13.7px;line-height:13.7px;color:#eeeeee;">Interaction String</div>
<div class="r" style="left:151px;top:219px;width:128px;height:19px;border:1px solid #ececec;background:#212121;"></div>
<div class="r" style="left:152px;top:220px;width:128px;height:1px;background:#0d0d0d;"></div>
<div class="r" style="left:152px;top:220px;width:1px;height:19px;background:#0d0d0d;"></div>
<div class="r" style="left:265px;top:221px;width:13px;height:15px;border-left:1px solid #f4f4f4;border-top:1px solid #f4f4f4;border-right:1px solid #8a8a8a;border-bottom:1px solid #8a8a8a;background:#212121"></div>
<svg class="r" style="left:268px;top:227px" width="8" height="5"><path d="M0 0H7.5L3.75 4Z" fill="#f4f4f4"/></svg>
<div class="t" style="left:155px;top:222.85px;font-size:14px;line-height:14px;color:#eeeeee;letter-spacing:0.1px;width:110px;overflow:hidden;padding-bottom:5px;"><span style="display:inline-block;transform:scaleX(0.905);transform-origin:0 0">NON-NON-NON-S</span></div>
<div class="t" style="left:11px;top:250.70px;font-size:13.7px;line-height:13.7px;color:#eeeeee;">Low Energy Limit</div>
<div class="t" style="left:157px;top:250.24px;font-size:15px;line-height:15px;color:#f6f6f6;font-weight:bold;font-family:'Liberation Serif', serif;letter-spacing:0.35px;transform:scaleX(1.13);transform-origin:0 0;-webkit-text-stroke:0.3px #f6f6f6;">1620.000</div>
<div class="r" style="left:233px;top:246px;width:48px;height:19px;border:1px solid #ececec;background:#212121;"></div>
<div class="r" style="left:234px;top:247px;width:48px;height:1px;background:#0d0d0d;"></div>
<div class="r" style="left:234px;top:247px;width:1px;height:19px;background:#0d0d0d;"></div>
<div class="r" style="left:267px;top:248px;width:13px;height:15px;border-left:1px solid #f4f4f4;border-top:1px solid #f4f4f4;border-right:1px solid #8a8a8a;border-bottom:1px solid #8a8a8a;background:#212121"></div>
<svg class="r" style="left:270px;top:254px" width="8" height="5"><path d="M0 0H7.5L3.75 4Z" fill="#f4f4f4"/></svg>
<div class="t" style="left:237px;top:249.85px;font-size:14px;line-height:14px;color:#eeeeee;letter-spacing:0.1px;width:30px;overflow:hidden;padding-bottom:5px;">nm</div>
<div class="t" style="left:11px;top:277.70px;font-size:13.7px;line-height:13.7px;color:#eeeeee;">High Energy LImit</div>
<div class="t" style="left:157px;top:277.24px;font-size:15px;line-height:15px;color:#f6f6f6;font-weight:bold;font-family:'Liberation Serif', serif;letter-spacing:0.35px;transform:scaleX(1.13);transform-origin:0 0;-webkit-text-stroke:0.3px #f6f6f6;">1140.000</div>
<div class="r" style="left:233px;top:273px;width:48px;height:19px;border:1px solid #ececec;background:#212121;"></div>
<div class="r" style="left:234px;top:274px;width:48px;height:1px;background:#0d0d0d;"></div>
<div class="r" style="left:234px;top:274px;width:1px;height:19px;background:#0d0d0d;"></div>
<div class="r" style="left:267px;top:275px;width:13px;height:15px;border-left:1px solid #f4f4f4;border-top:1px solid #f4f4f4;border-right:1px solid #8a8a8a;border-bottom:1px solid #8a8a8a;background:#212121"></div>
<svg class="r" style="left:270px;top:281px" width="8" height="5"><path d="M0 0H7.5L3.75 4Z" fill="#f4f4f4"/></svg>
<div class="t" style="left:237px;top:276.85px;font-size:14px;line-height:14px;color:#eeeeee;letter-spacing:0.1px;width:30px;overflow:hidden;padding-bottom:5px;">nm</div>
<div class="t" style="left:11px;top:302.35px;font-size:14px;line-height:14px;color:#ffc107;font-weight:bold;letter-spacing:0.45px;">Motors</div>
<div class="t" style="left:11px;top:326.70px;font-size:13.7px;line-height:13.7px;color:#eeeeee;">Crystal_1</div>
<div class="t" style="left:157px;top:326.24px;font-size:15px;line-height:15px;color:#f6f6f6;font-weight:bold;font-family:'Liberation Serif', serif;letter-spacing:0.35px;transform:scaleX(1.13);transform-origin:0 0;-webkit-text-stroke:0.3px #f6f6f6;">-8.441500</div>
<div class="t" style="left:11px;top:352.70px;font-size:13.7px;line-height:13.7px;color:#eeeeee;">Dest. Crystal_1</div>
<div class="r" style="left:154px;top:348px;width:128px;height:19px;border:1px solid #ececec;background:#212121;"></div>
<div class="r" style="left:155px;top:349px;width:128px;height:1px;background:#0d0d0d;"></div>
<div class="r" style="left:155px;top:349px;width:1px;height:19px;background:#0d0d0d;"></div>
<div class="t" style="left:157px;top:351.85px;font-size:14px;line-height:14px;color:#eeeeee;letter-spacing:0.2px;">-8.441500</div>
<div class="r" style="left:11px;top:375px;width:134px;height:25px;background:#ffc107;"></div>
<div class="t" style="left:-122.0px;width:400px;text-align:center;top:380.65px;font-size:14px;line-height:14px;color:#111;font-weight:bold;letter-spacing:0.45px;">HOME</div>
<div class="r" style="left:151px;top:375px;width:133px;height:25px;background:#009688;"></div>
<div class="t" style="left:17.5px;width:400px;text-align:center;top:380.65px;font-size:14px;line-height:14px;color:#111;font-weight:bold;letter-spacing:0.45px;">SET</div>
<div class="t" style="left:11px;top:409.70px;font-size:13.7px;line-height:13.7px;color:#eeeeee;">Delay_1</div>
<div class="t" style="left:157px;top:409.24px;font-size:15px;line-height:15px;color:#f6f6f6;font-weight:bold;font-family:'Liberation Serif', serif;letter-spacing:0.35px;transform:scaleX(1.13);transform-origin:0 0;-webkit-text-stroke:0.3px #f6f6f6;">2.640000</div>
<div class="t" style="left:11px;top:435.70px;font-size:13.7px;line-height:13.7px;color:#eeeeee;">Dest. Delay_1</div>
<div class="r" style="left:154px;top:431px;width:128px;height:19px;border:1px solid #ececec;background:#212121;"></div>
<div class="r" style="left:155px;top:432px;width:128px;height:1px;background:#0d0d0d;"></div>
<div class="r" style="left:155px;top:432px;width:1px;height:19px;background:#0d0d0d;"></div>
<div class="t" style="left:157px;top:434.85px;font-size:14px;line-height:14px;color:#eeeeee;letter-spacing:0.2px;">2.640000</div>
<div class="r" style="left:11px;top:458px;width:134px;height:25px;background:#ffc107;"></div>
<div class="t" style="left:-122.0px;width:400px;text-align:center;top:463.65px;font-size:14px;line-height:14px;color:#111;font-weight:bold;letter-spacing:0.45px;">HOME</div>
<div class="r" style="left:151px;top:458px;width:133px;height:25px;background:#009688;"></div>
<div class="t" style="left:17.5px;width:400px;text-align:center;top:463.65px;font-size:14px;line-height:14px;color:#111;font-weight:bold;letter-spacing:0.45px;">SET</div>
<div class="t" style="left:11px;top:492.70px;font-size:13.7px;line-height:13.7px;color:#eeeeee;">Crystal_2</div>
<div class="t" style="left:157px;top:492.24px;font-size:15px;line-height:15px;color:#f6f6f6;font-weight:bold;font-family:'Liberation Serif', serif;letter-spacing:0.35px;transform:scaleX(1.13);transform-origin:0 0;-webkit-text-stroke:0.3px #f6f6f6;">5.441667</div>
<div class="t" style="left:11px;top:518.70px;font-size:13.7px;line-height:13.7px;color:#eeeeee;">Dest. Crystal_2</div>
<div class="r" style="left:154px;top:514px;width:128px;height:19px;border:1px solid #ececec;background:#212121;"></div>
<div class="r" style="left:155px;top:515px;width:128px;height:1px;background:#0d0d0d;"></div>
<div class="r" style="left:155px;top:515px;width:1px;height:19px;background:#0d0d0d;"></div>
<div class="t" style="left:157px;top:517.85px;font-size:14px;line-height:14px;color:#eeeeee;letter-spacing:0.2px;">5.441667</div>
<div class="r" style="left:11px;top:541px;width:134px;height:25px;background:#ffc107;"></div>
<div class="t" style="left:-122.0px;width:400px;text-align:center;top:546.65px;font-size:14px;line-height:14px;color:#111;font-weight:bold;letter-spacing:0.45px;">HOME</div>
<div class="r" style="left:151px;top:541px;width:133px;height:25px;background:#009688;"></div>
<div class="t" style="left:17.5px;width:400px;text-align:center;top:546.65px;font-size:14px;line-height:14px;color:#111;font-weight:bold;letter-spacing:0.45px;">SET</div>
<div class="t" style="left:11px;top:575.70px;font-size:13.7px;line-height:13.7px;color:#eeeeee;">Delay_2</div>
<div class="t" style="left:157px;top:575.24px;font-size:15px;line-height:15px;color:#f6f6f6;font-weight:bold;font-family:'Liberation Serif', serif;letter-spacing:0.35px;transform:scaleX(1.13);transform-origin:0 0;-webkit-text-stroke:0.3px #f6f6f6;">57.033333</div>
<div class="t" style="left:11px;top:601.70px;font-size:13.7px;line-height:13.7px;color:#eeeeee;">Dest. Delay_2</div>
<div class="r" style="left:154px;top:597px;width:128px;height:19px;border:1px solid #ececec;background:#212121;"></div>
<div class="r" style="left:155px;top:598px;width:128px;height:1px;background:#0d0d0d;"></div>
<div class="r" style="left:155px;top:598px;width:1px;height:19px;background:#0d0d0d;"></div>
<div class="t" style="left:157px;top:600.85px;font-size:14px;line-height:14px;color:#eeeeee;letter-spacing:0.2px;">57.033333</div>
<div class="r" style="left:11px;top:624px;width:134px;height:25px;background:#ffc107;"></div>
<div class="t" style="left:-122.0px;width:400px;text-align:center;top:629.65px;font-size:14px;line-height:14px;color:#111;font-weight:bold;letter-spacing:0.45px;">HOME</div>
<div class="r" style="left:151px;top:624px;width:133px;height:25px;background:#009688;"></div>
<div class="t" style="left:17.5px;width:400px;text-align:center;top:629.65px;font-size:14px;line-height:14px;color:#111;font-weight:bold;letter-spacing:0.45px;">SET</div>
<div class="t" style="left:11px;top:658.70px;font-size:13.7px;line-height:13.7px;color:#eeeeee;">Mixer_1</div>
<div class="t" style="left:157px;top:658.24px;font-size:15px;line-height:15px;color:#f6f6f6;font-weight:bold;font-family:'Liberation Serif', serif;letter-spacing:0.35px;transform:scaleX(1.13);transform-origin:0 0;-webkit-text-stroke:0.3px #f6f6f6;">0.000000</div>
<div class="t" style="left:11px;top:684.70px;font-size:13.7px;line-height:13.7px;color:#eeeeee;">Dest. Mixer_1</div>
<div class="r" style="left:154px;top:680px;width:128px;height:19px;border:1px solid #ececec;background:#212121;"></div>
<div class="r" style="left:155px;top:681px;width:128px;height:1px;background:#0d0d0d;"></div>
<div class="r" style="left:155px;top:681px;width:1px;height:19px;background:#0d0d0d;"></div>
<div class="t" style="left:157px;top:683.85px;font-size:14px;line-height:14px;color:#eeeeee;letter-spacing:0.2px;">0.000000</div>
<div class="r" style="left:11px;top:707px;width:134px;height:25px;background:#ffc107;"></div>
<div class="t" style="left:-122.0px;width:400px;text-align:center;top:712.65px;font-size:14px;line-height:14px;color:#111;font-weight:bold;letter-spacing:0.45px;">HOME</div>
<div class="r" style="left:151px;top:707px;width:133px;height:25px;background:#009688;"></div>
<div class="t" style="left:17.5px;width:400px;text-align:center;top:712.65px;font-size:14px;line-height:14px;color:#111;font-weight:bold;letter-spacing:0.45px;">SET</div>
<div class="t" style="left:11px;top:741.70px;font-size:13.7px;line-height:13.7px;color:#eeeeee;">Mixer_2</div>
<div class="t" style="left:157px;top:741.24px;font-size:15px;line-height:15px;color:#f6f6f6;font-weight:bold;font-family:'Liberation Serif', serif;letter-spacing:0.35px;transform:scaleX(1.13);transform-origin:0 0;-webkit-text-stroke:0.3px #f6f6f6;">0.000000</div>
<div class="t" style="left:11px;top:767.70px;font-size:13.7px;line-height:13.7px;color:#eeeeee;">Dest. Mixer_2</div>
<div class="r" style="left:154px;top:763px;width:128px;height:19px;border:1px solid #ececec;background:#212121;"></div>
<div class="r" style="left:155px;top:764px;width:128px;height:1px;background:#0d0d0d;"></div>
<div class="r" style="left:155px;top:764px;width:1px;height:19px;background:#0d0d0d;"></div>
<div class="t" style="left:157px;top:766.85px;font-size:14px;line-height:14px;color:#eeeeee;letter-spacing:0.2px;">0.000000</div>
<div class="r" style="left:11px;top:790px;width:134px;height:25px;background:#ffc107;"></div>
<div class="t" style="left:-122.0px;width:400px;text-align:center;top:795.65px;font-size:14px;line-height:14px;color:#111;font-weight:bold;letter-spacing:0.45px;">HOME</div>
<div class="r" style="left:151px;top:790px;width:133px;height:25px;background:#009688;"></div>
<div class="t" style="left:17.5px;width:400px;text-align:center;top:795.65px;font-size:14px;line-height:14px;color:#111;font-weight:bold;letter-spacing:0.45px;">SET</div>
<div class="t" style="left:11px;top:824.70px;font-size:13.7px;line-height:13.7px;color:#eeeeee;">Mixer_3</div>
<div class="t" style="left:157px;top:824.24px;font-size:15px;line-height:15px;color:#f6f6f6;font-weight:bold;font-family:'Liberation Serif', serif;letter-spacing:0.35px;transform:scaleX(1.13);transform-origin:0 0;-webkit-text-stroke:0.3px #f6f6f6;">0.000000</div>
<div class="t" style="left:11px;top:850.70px;font-size:13.7px;line-height:13.7px;color:#eeeeee;">Dest. Mixer_3</div>
<div class="r" style="left:154px;top:846px;width:128px;height:19px;border:1px solid #ececec;background:#212121;"></div>
<div class="r" style="left:155px;top:847px;width:128px;height:1px;background:#0d0d0d;"></div>
<div class="r" style="left:155px;top:847px;width:1px;height:19px;background:#0d0d0d;"></div>
<div class="t" style="left:157px;top:849.85px;font-size:14px;line-height:14px;color:#eeeeee;letter-spacing:0.2px;">0.000000</div>
<div class="r" style="left:11px;top:873px;width:134px;height:25px;background:#ffc107;"></div>
<div class="t" style="left:-122.0px;width:400px;text-align:center;top:878.65px;font-size:14px;line-height:14px;color:#111;font-weight:bold;letter-spacing:0.45px;">HOME</div>
<div class="r" style="left:151px;top:873px;width:133px;height:25px;background:#009688;"></div>
<div class="t" style="left:17.5px;width:400px;text-align:center;top:878.65px;font-size:14px;line-height:14px;color:#111;font-weight:bold;letter-spacing:0.45px;">SET</div>
</div>
<!--PLOT-->
</body></html>
